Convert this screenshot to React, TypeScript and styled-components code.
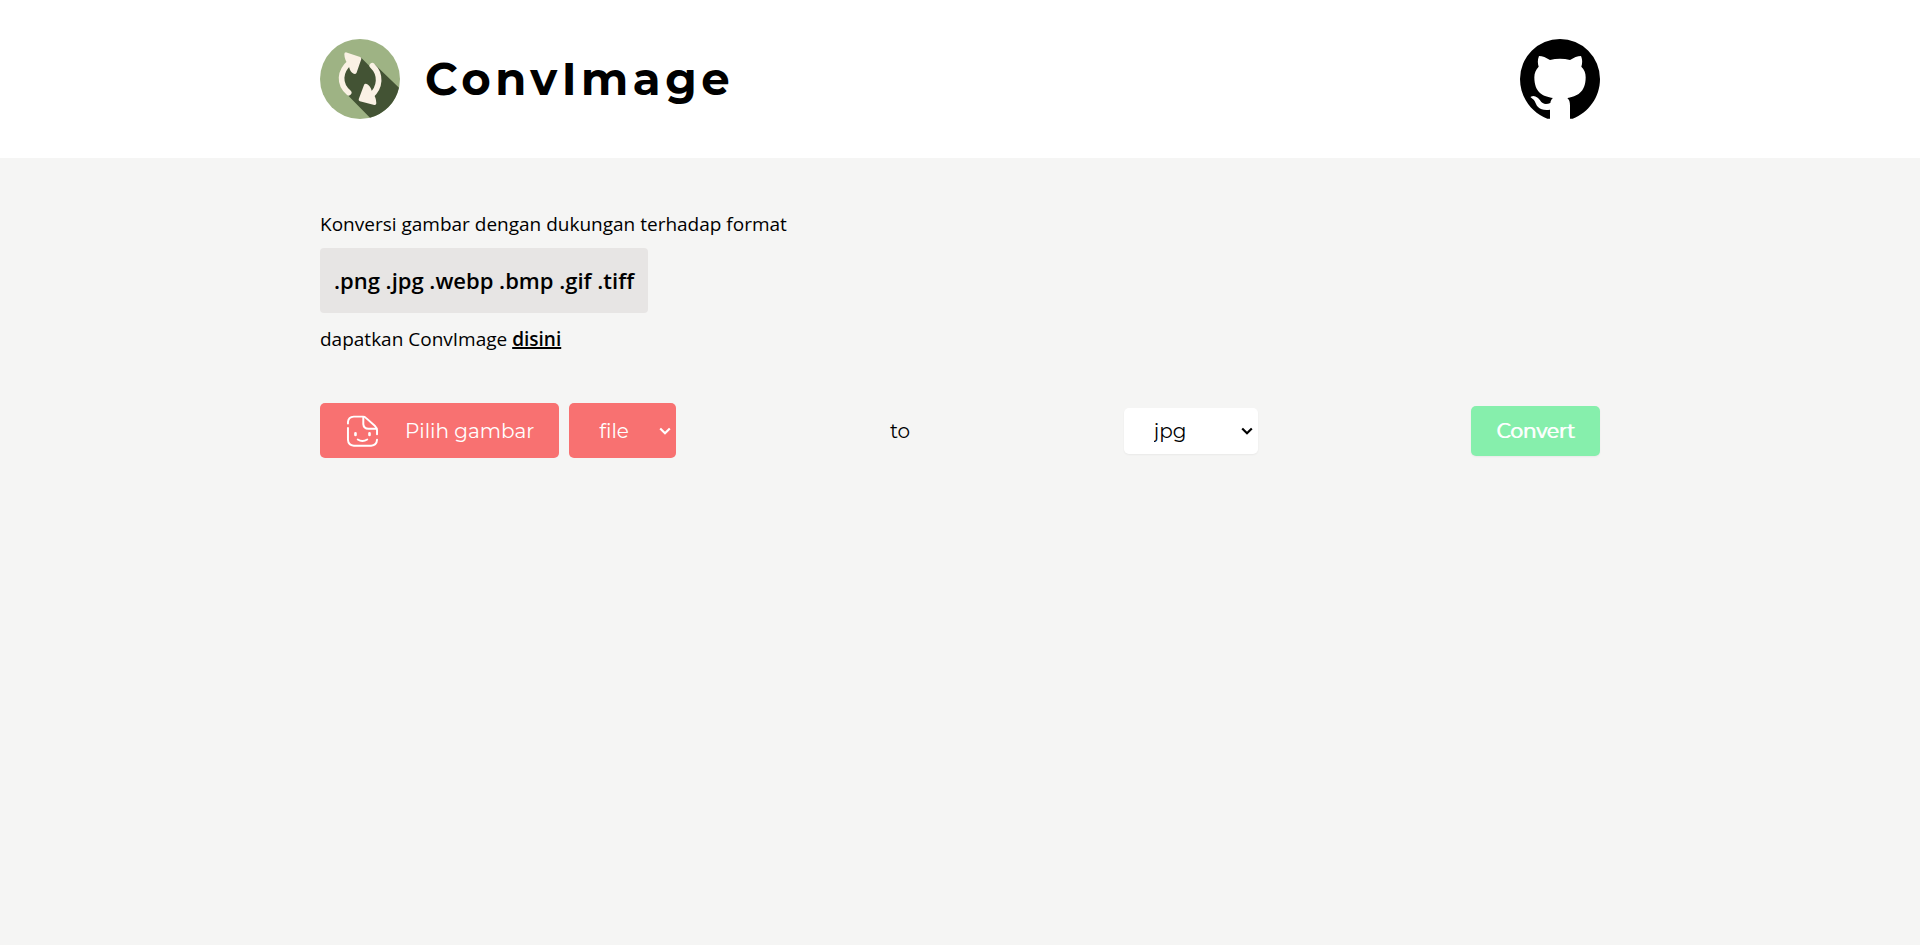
import React from 'react';
import styled, { createGlobalStyle } from 'styled-components';

const display = '"Montserrat", "Inter", "Liberation Sans", sans-serif';
const body = '"Segoe UI", "Open Sans", "Noto Sans", sans-serif';

const GlobalStyle = createGlobalStyle`
  *, *::before, *::after { box-sizing: border-box; }
  body {
    margin: 0;
    min-height: 100vh;
    background: #f5f5f4;
    color: #000;
    font-family: ${body};
    font-size: 20px;
    line-height: 28px;
  }
  h1, p { margin: 0; }
`;

const Container = styled.div`
  width: 100%;
  max-width: 1280px;
  margin: 0 auto;
`;

const Header = styled.header`
  background: #fff;
  padding: 39px 0;
`;

const HeaderRow = styled(Container)`
  display: flex;
  align-items: center;
  justify-content: space-between;
`;

const Brand = styled.div`
  display: flex;
  align-items: center;
  gap: 25px;
`;

const Title = styled.h1`
  font-family: ${display};
  font-size: 45px;
  font-weight: 700;
  line-height: 48px;
  letter-spacing: 0.1em;
`;

const GithubLink = styled.a`
  display: block;
  color: #000;
`;

const Mark = styled.svg`
  display: block;
  width: 80px;
  height: 80px;
`;

const Main = styled.main`
  padding: 52px 0;
`;

const Intro = styled.section`
  display: flex;
  flex-direction: column;
  align-items: flex-start;
  gap: 10px;
`;

const Text = styled.p`
  font-size: 19px;
  font-weight: 400;
`;

const Formats = styled.p`
  margin-bottom: 2px;
  padding: 18px 14px;
  border-radius: 4px;
  background: #e7e5e4;
  font-size: 22px;
  font-weight: 600;
  line-height: 29px;
`;

const TextLink = styled.a`
  color: inherit;
  font-weight: 600;
  text-decoration: underline;
  text-decoration-thickness: 2px;
`;

const Form = styled.form`
  display: flex;
  align-items: center;
  justify-content: space-between;
  margin-top: 50px;
  font-family: ${display};
`;

const Source = styled.div`
  display: flex;
  gap: 10px;
`;

const PickButton = styled.button`
  display: flex;
  align-items: center;
  gap: 27px;
  height: 55px;
  padding: 0 25px 0 26px;
  border: 0;
  border-radius: 5px;
  background: #f87171;
  color: #fff;
  font: inherit;
`;

const FaceIcon = styled.svg`
  width: 32px;
  height: 32px;
`;

const SelectBox = styled.div<{ $tone: 'red' | 'white' }>`
  position: relative;
  width: ${({ $tone }) => ($tone === 'red' ? 107 : 134)}px;
  height: ${({ $tone }) => ($tone === 'red' ? 55 : 46)}px;
  border-radius: 5px;
  background: ${({ $tone }) => ($tone === 'red' ? '#f87171' : '#fff')};
  color: ${({ $tone }) => ($tone === 'red' ? '#fff' : '#000')};
  box-shadow: ${({ $tone }) => ($tone === 'red' ? 'none' : '0 1px 2px rgba(0, 0, 0, 0.05)')};
`;

const Select = styled.select`
  appearance: none;
  width: 100%;
  height: 100%;
  padding: 0 24px 0 30px;
  border: 0;
  border-radius: inherit;
  background: transparent;
  color: inherit;
  font: inherit;
`;

const Chevron = styled.svg`
  position: absolute;
  top: calc(50% - 4px);
  right: 5px;
  width: 12px;
  height: 8px;
  pointer-events: none;
`;

/* The label is thickened with a shadow, which keeps the regular width. */
const ConvertButton = styled.button`
  height: 50px;
  padding: 0 25px;
  border: 0;
  border-radius: 5px;
  background: #86efac;
  color: #fff;
  box-shadow: 0 1px 2px rgba(0, 0, 0, 0.05);
  font: inherit;
  text-shadow: 1px 0 currentColor;
`;

const Logo = () => (
  <Mark viewBox="0 0 240 240" aria-hidden="true">
    <circle cx="120" cy="120" r="120" fill="#9eb384" />
    <path
      d="M122 55 L152 85 L164 76 L237 146 A120 120 0 0 1 150 236 L82 167 C66 140 62 110 80 82 Z"
      fill="#435334"
    />
    <g fill="none" stroke="#faf1e4" strokeWidth="17" strokeLinecap="round">
      <path d="M86 161 C56 135 58 97 90 70" />
      <path d="M157 80 C184 106 182 145 152 171" />
    </g>
    <g fill="#faf1e4" stroke="#faf1e4" strokeWidth="10" strokeLinejoin="round">
      <path d="M78 45 L119 59 L105 100 Q98 99 94 89 L90 76 Q78 60 78 45 Z" />
      <path d="M121 182 L137 139 Q143 140 148 150 L153 163 Q164 178 164 193 Z" />
    </g>
  </Mark>
);

const Github = () => (
  <Mark viewBox="0 0 240 240" aria-hidden="true">
    <path
      fill="currentColor"
      d="M120 0 A120 120 0 0 0 0 120 C0 174 34 220 82 239 H90 V212 C58 216 51 202 47 193 C43 182 38 180 32 175 C31 174 35 171 40 171 C49 171 56 178 60 184 C68 197 79 197 91 192 C92 185 95 180 99 177 C70 173 43 162 43 115 C43 102 48 91 56 83 C53 75 52 63 57 51 C67 51 79 56 90 63 C109 58 131 58 150 63 C161 56 173 51 183 51 C188 63 187 75 184 83 C193 92 197 102 197 115 C197 161 170 173 142 177 C148 182 150 189 150 200 V239 H158 C206 221 240 174 240 120 A120 120 0 0 0 120 0 Z"
    />
  </Mark>
);

const SmileFile = () => (
  <FaceIcon
    viewBox="0 0 98 98"
    fill="none"
    stroke="currentColor"
    strokeWidth="6"
    strokeLinecap="round"
    strokeLinejoin="round"
    aria-hidden="true"
  >
    <path d="M6 26 V22 Q7 6 24 5 H53 Q57 5 60 8 L89 34 Q95 40 95 46 V59" />
    <path d="M53 6 V28 Q54 42 69 42 H93" />
    <path d="M6 40 V76 Q7 93 24 94 H77 Q94 93 95 76" />
    <path d="M29 56 V61 M72 56 V61" strokeWidth="8" />
    <path d="M36 75 Q50 84 65 75" />
  </FaceIcon>
);

const SelectArrow = () => (
  <Chevron
    viewBox="0 0 12 8"
    fill="none"
    stroke="currentColor"
    strokeWidth="2.2"
    aria-hidden="true"
  >
    <path d="M1.2 1.5 L6 6.2 L10.8 1.5" />
  </Chevron>
);

export default function App() {
  return (
    <>
      <GlobalStyle />
      <Header>
        <HeaderRow>
          <Brand>
            <Logo />
            <Title>ConvImage</Title>
          </Brand>
          <GithubLink href="#github" aria-label="GitHub">
            <Github />
          </GithubLink>
        </HeaderRow>
      </Header>
      <Main>
        <Container>
          <Intro>
            <Text>Konversi gambar dengan dukungan terhadap format</Text>
            <Formats>.png .jpg .webp .bmp .gif .tiff</Formats>
            <Text>
              dapatkan ConvImage <TextLink href="#disini">disini</TextLink>
            </Text>
          </Intro>
          <Form onSubmit={(event) => event.preventDefault()}>
            <Source>
              <PickButton type="button">
                <SmileFile />
                Pilih gambar
              </PickButton>
              <SelectBox $tone="red">
                <Select aria-label="Sumber" defaultValue="file">
                  <option value="file">file</option>
                </Select>
                <SelectArrow />
              </SelectBox>
            </Source>
            <label htmlFor="target-format">to</label>
            <SelectBox $tone="white">
              <Select id="target-format" defaultValue="jpg">
                <option value="jpg">jpg</option>
              </Select>
              <SelectArrow />
            </SelectBox>
            <ConvertButton type="submit">Convert</ConvertButton>
          </Form>
        </Container>
      </Main>
    </>
  );
}
